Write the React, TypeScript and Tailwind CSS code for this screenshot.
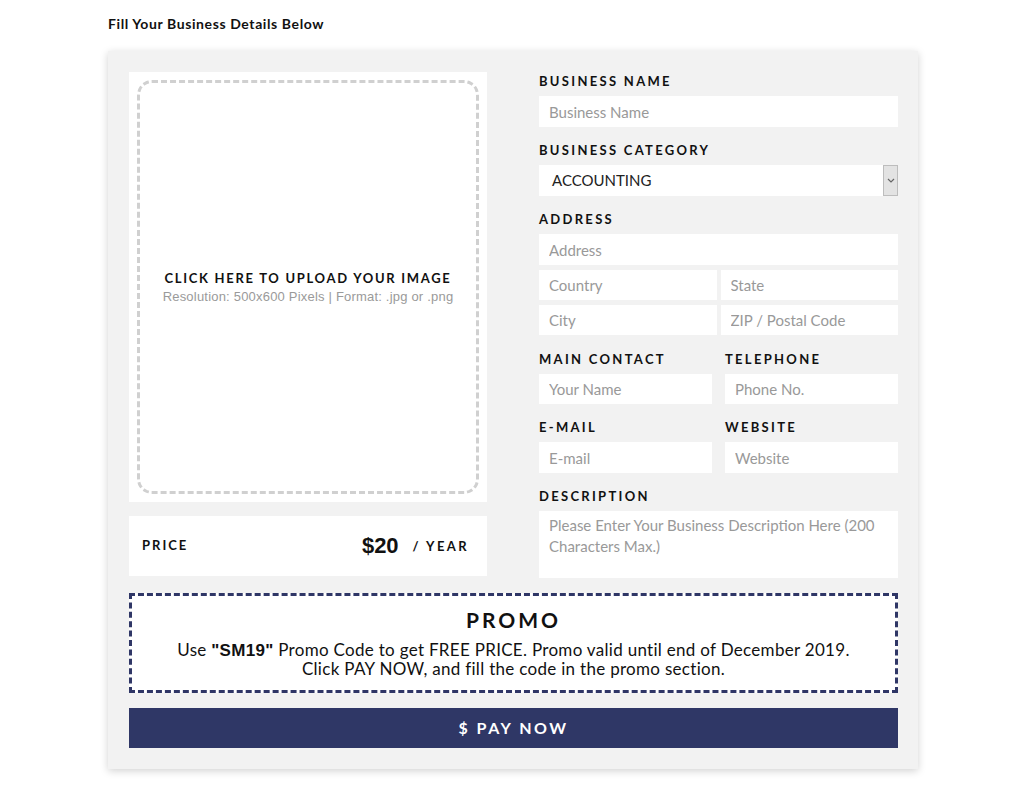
import React from 'react';

const font = { fontFamily: 'Lato, "Open Sans", sans-serif' };
const arial = { fontFamily: '"Liberation Sans", Arial, sans-serif' };

const labelCls =
  'block text-[13px] font-bold tracking-[2.3px] uppercase text-[#111] leading-none mb-[8px]';
const inputCls =
  'w-full bg-white px-[10px] text-[15px] text-[#333] placeholder:text-[#999] outline-none border-0';

function Field({ placeholder, tall = false }: { placeholder: string; tall?: boolean }) {
  return (
    <input
      className={inputCls + (tall ? ' h-[31px]' : ' h-[30px]')}
      placeholder={placeholder}
      style={font}
    />
  );
}

export default function App() {
  return (
    <div className="min-h-screen bg-white pt-[16px] pb-[22px]" style={font}>
      <div className="w-[810px] ml-[108px]">
        <h2 className="text-[14px] font-bold tracking-[0.6px] text-[#111] leading-[16px] mb-[19px]">
          Fill Your Business Details Below
        </h2>

        <div className="bg-[#f2f2f2] shadow-[0_2px_8px_rgba(0,0,0,0.18)] pt-[21px] pl-[21px] pr-[20px] pb-[21px]">
          <div className="flex gap-[52px]">
            {/* Left column: upload + price */}
            <div className="w-[358px] shrink-0 flex flex-col gap-[14px]">
              <div className="bg-white h-[430px] p-[8px]">
                <div className="h-full border-[3px] border-dashed border-[#d0d0d0] rounded-[15px] flex flex-col items-center justify-center cursor-pointer">
                  <div className="text-[13px] font-bold tracking-[1.7px] text-[#111] leading-none">
                    CLICK HERE TO UPLOAD YOUR IMAGE
                  </div>
                  <div
                    className="text-[13px] tracking-[0.2px] text-[#9a9a9a] mt-[5px] leading-none"
                    style={arial}
                  >
                    Resolution: 500x600 Pixels | Format: .jpg or .png
                  </div>
                </div>
              </div>
              <div className="bg-white h-[60px] flex items-center justify-between pl-[13px] pr-[18px]">
                <span className="text-[13px] font-bold tracking-[2px] text-[#111]">PRICE</span>
                <span className="flex items-center gap-[14px]">
                  <span className="text-[22px] font-bold text-[#111] leading-none" style={arial}>
                    $20
                  </span>
                  <span className="text-[13px] font-bold tracking-[2.4px] text-[#111] leading-none">
                    / YEAR
                  </span>
                </span>
              </div>
            </div>

            {/* Right column: form */}
            <div className="flex-1 flex flex-col pt-[3px]">
              <label className={labelCls}>Business Name</label>
              <Field placeholder="Business Name" tall />

              <label className={labelCls + ' mt-[17px]'}>Business Category</label>
              <div className="h-[31px] bg-white flex items-center justify-between pl-[13px]">
                <span className="text-[15px] text-[#222]">ACCOUNTING</span>
                <span className="w-[15px] h-full bg-[#e3e3e3] border border-[#bdbdbd] flex items-center justify-center">
                  <svg width="8" height="5" viewBox="0 0 8 5" fill="none">
                    <path d="M1 1l3 3 3-3" stroke="#666" strokeWidth="1.2" />
                  </svg>
                </span>
              </div>

              <label className={labelCls + ' mt-[17px] mb-[8px]'}>Address</label>
              <div className="flex flex-col gap-[5px]">
                <Field placeholder="Address" tall />
                <div className="flex gap-[4px]">
                  <Field placeholder="Country" />
                  <Field placeholder="State" />
                </div>
                <div className="flex gap-[4px]">
                  <Field placeholder="City" />
                  <Field placeholder="ZIP / Postal Code" />
                </div>
              </div>

              <div className="flex gap-[13px] mt-[18px]">
                <div className="flex-1">
                  <label className={labelCls}>Main Contact</label>
                  <Field placeholder="Your Name" />
                </div>
                <div className="flex-1">
                  <label className={labelCls}>Telephone</label>
                  <Field placeholder="Phone No." />
                </div>
              </div>

              <div className="flex gap-[13px] mt-[17px]">
                <div className="flex-1">
                  <label className={labelCls}>E-mail</label>
                  <Field placeholder="E-mail" tall />
                </div>
                <div className="flex-1">
                  <label className={labelCls}>Website</label>
                  <Field placeholder="Website" tall />
                </div>
              </div>

              <label className={labelCls + ' mt-[17px] mb-[7px]'}>Description</label>
              <textarea
                className="w-full h-[67px] bg-white px-[10px] py-[4px] text-[15px] leading-[21px] text-[#333] placeholder:text-[#999] outline-none resize-none"
                style={font}
                placeholder="Please Enter Your Business Description Here (200 Characters Max.)"
              />
            </div>
          </div>

          {/* Promo */}
          <div className="mt-[15px] h-[100px] bg-white border-[3px] border-dashed border-[#2f3666] flex flex-col items-center justify-center text-center">
            <div className="text-[21px] font-bold tracking-[3px] text-[#111] leading-none">PROMO</div>
            <div className="text-[17px] tracking-[0.3px] text-[#111] leading-[18px] mt-[11px]">
              Use{' '}
              <b style={arial}>"SM19"</b> Promo Code to get FREE PRICE. Promo valid until end of
              December 2019.
              <br />
              Click PAY NOW, and fill the code in the promo section.
            </div>
          </div>

          {/* Pay button */}
          <button className="mt-[15px] w-full h-[40px] bg-[#2f3766] text-white text-[16px] font-bold tracking-[2.5px]">
            $ PAY NOW
          </button>
        </div>
      </div>
    </div>
  );
}
